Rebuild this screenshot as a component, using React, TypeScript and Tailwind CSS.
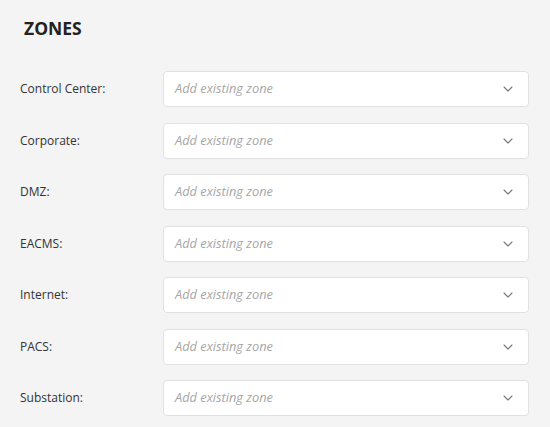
import { ChevronDown } from "lucide-react";

const zones = [
  "Control Center",
  "Corporate",
  "DMZ",
  "EACMS",
  "Internet",
  "PACS",
  "Substation",
];

function ZoneRow({ label }: { label: string }) {
  return (
    <div className="flex items-center">
      <label className="w-[143px] shrink-0 text-[12px] text-[#333]">
        {label}:
      </label>
      <div className="flex h-[36px] flex-1 items-center justify-between rounded-[4px] border border-[#e1e1e1] bg-white pl-[11px] pr-[12px]">
        <span className="text-[12.8px] italic text-[#a6a6a6]">
          Add existing zone
        </span>
        <ChevronDown className="h-[16px] w-[16px] text-[#777]" strokeWidth={1.6} />
      </div>
    </div>
  );
}

export default function App() {
  return (
    <div
      className="min-h-[427px] w-[550px] bg-[#f4f4f4] pl-[20px] pr-[21px] pt-[16px]"
      style={{ fontFamily: '"Open Sans", sans-serif' }}
    >
      <h2 className="pl-[4px] text-[17.5px] font-bold leading-[24px] text-[#222]">
        ZONES
      </h2>
      <div className="mt-[31px] flex flex-col gap-[15.5px]">
        {zones.map((zone) => (
          <ZoneRow label={zone} key={zone} />
        ))}
      </div>
    </div>
  );
}
